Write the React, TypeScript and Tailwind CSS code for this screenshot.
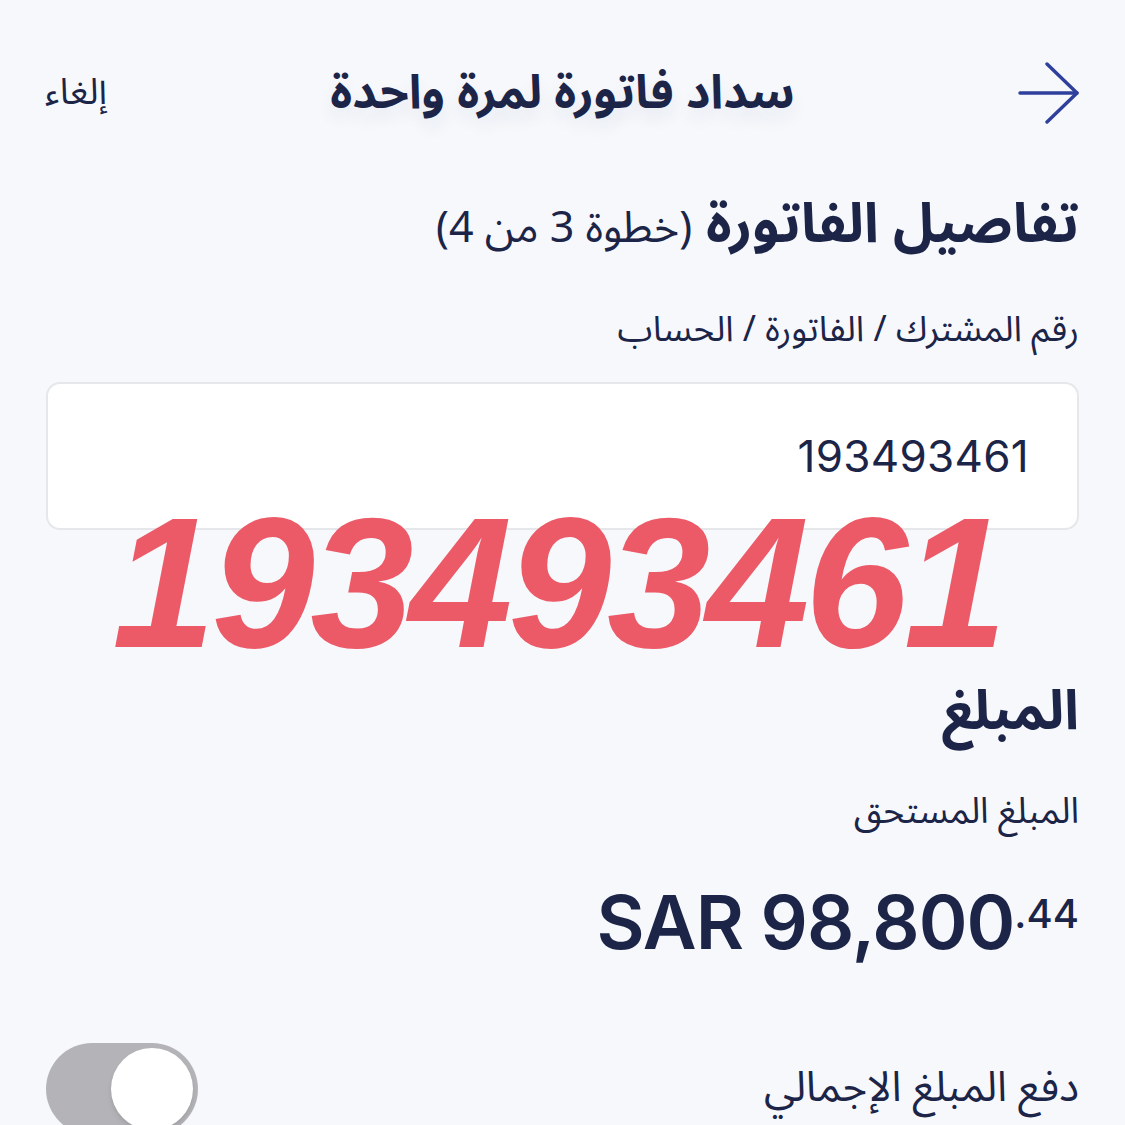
const arabic = 'font-["Noto_Sans_Arabic","DejaVu_Sans","Noto_Sans",sans-serif]'

function BackArrow() {
  return (
    <svg width="62" height="62" viewBox="0 0 62 62" fill="none" stroke="#2f3f9c" strokeWidth="3.4" strokeLinecap="round" strokeLinejoin="round">
      <path d="M2 31H59" />
      <path d="M29 2L59 31L29 60" />
    </svg>
  )
}

export default function App() {
  return (
    <div dir="rtl" className={`w-[1125px] h-[1125px] overflow-hidden bg-[#f6f8fc] text-[#1c2548] ${arabic}`}>
      {/* header */}
      <div className="h-[185px] flex items-center px-[45px] justify-between">
        <BackArrow />
        <h1 className="text-[47px] font-bold leading-[70px] [text-shadow:0_10px_18px_rgba(28,37,72,0.07)]">سداد فاتورة لمرة واحدة</h1>
        <button className="text-[36px] leading-[70px]">إلغاء</button>
      </div>

      <div className="px-[46px]">
        <div className="flex items-baseline gap-[14px]">
          <h2 className="text-[55px] font-bold leading-[80px]">تفاصيل الفاتورة</h2>
          <span className="text-[43px]">(خطوة 3 من 4)</span>
        </div>

        <div className="mt-[40px] text-[35.5px] leading-[50px]">رقم المشترك / الفاتورة / الحساب</div>

        <div className="mt-[27px] h-[148px] rounded-[14px] bg-white border-2 border-[#e6e7eb] flex items-center pr-[48px]">
          <span dir="ltr" className="text-[44px] font-['Inter',sans-serif] text-[#1c2548] tracking-[0.3px]">193493461</span>
        </div>

        <div dir="ltr" className="-mt-[23px] h-[152px] flex justify-center pr-[10px]">
          <span className="font-['Liberation_Sans',sans-serif] font-bold italic text-[186px] leading-[152px] text-[#ec5a68] tracking-[-4.5px]">193493461</span>
        </div>

        <h2 className="mt-[13px] text-[55px] font-bold leading-[80px]">المبلغ</h2>

        <div className="mt-[35px] text-[36px] leading-[50px]">المبلغ المستحق</div>

        <div dir="ltr" className="mt-[35px] flex justify-end items-start font-['Inter',sans-serif] font-semibold">
          <span className="text-[74px] leading-[100px] tracking-[-1px]">SAR 98,800</span>
          <span className="text-[40px] leading-[60px] font-medium mt-[12px]">.44</span>
        </div>

        <div className="mt-[71px] flex items-start justify-between">
          <div className="text-[42px] leading-[56px] mt-[17px]">دفع المبلغ الإجمالي</div>
          <div className="w-[152px] h-[92px] rounded-full bg-[#b4b4b8] flex items-center justify-start px-[5px]">
            <div className="w-[82px] h-[82px] rounded-full bg-white shadow-md" />
          </div>
        </div>
      </div>
    </div>
  )
}
